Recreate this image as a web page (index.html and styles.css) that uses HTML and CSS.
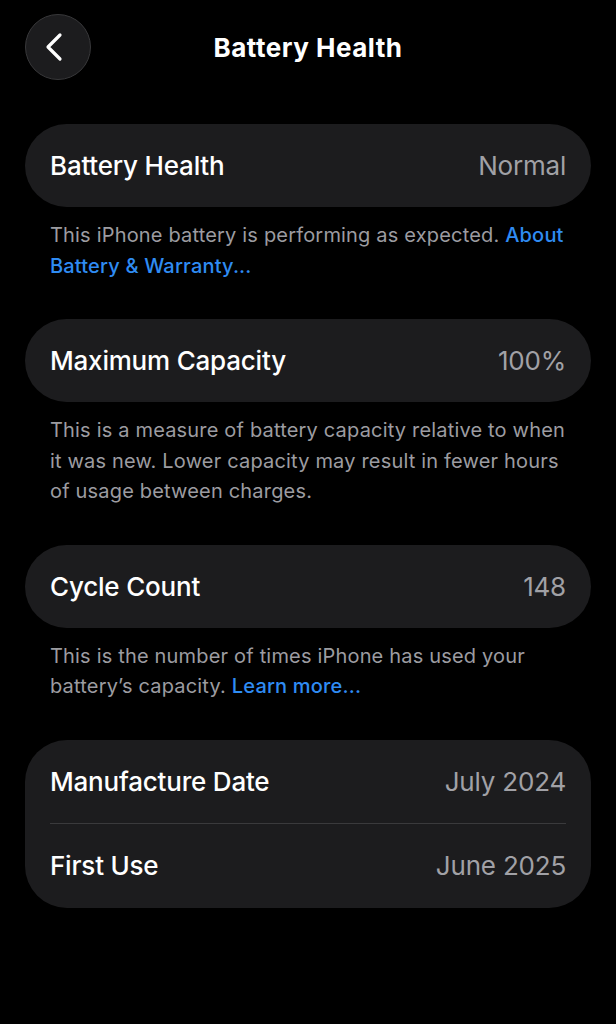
FILE: index.html
```html
<!DOCTYPE html>
<html lang="en">
<head>
<meta charset="UTF-8">
<meta name="viewport" content="width=device-width, initial-scale=1.0">
<title>Battery Health</title>
<link rel="stylesheet" href="styles.css">
</head>
<body>
<div id="screen">
    <div class="nav-bar">
        <button class="back-btn" type="button" aria-label="Back">
            <svg width="24" height="30" viewBox="0 0 24 30"><path d="M16 3 L4 15 L16 27" fill="none" stroke="#fff" stroke-width="3.2" stroke-linecap="round" stroke-linejoin="round"/></svg>
        </button>
        <h1 class="nav-title">Battery Health</h1>
    </div>

    <div class="section">
        <div class="card">
            <div class="row"><span class="label">Battery Health</span><span class="value">Normal</span></div>
        </div>
        <p class="footer">This iPhone battery is performing as expected. <a href="#">About Battery &amp; Warranty...</a></p>
    </div>

    <div class="section">
        <div class="card">
            <div class="row"><span class="label">Maximum Capacity</span><span class="value">100%</span></div>
        </div>
        <p class="footer">This is a measure of battery capacity relative to when it was new. Lower capacity may result in fewer hours of usage between charges.</p>
    </div>

    <div class="section">
        <div class="card">
            <div class="row"><span class="label">Cycle Count</span><span class="value">148</span></div>
        </div>
        <p class="footer">This is the number of times iPhone has used your battery’s capacity. <a href="#">Learn more...</a></p>
    </div>

    <div class="section">
        <div class="card">
            <div class="row"><span class="label">Manufacture Date</span><span class="value">July 2024</span></div>
            <div class="row"><span class="label">First Use</span><span class="value">June 2025</span></div>
        </div>
    </div>
</div>
</body>
</html>
```

FILE: styles.css
```css
/* iOS dark settings look */
body, html {
    margin: 0;
    padding: 0;
    background: #000;
    font-family: Inter, "Noto Sans", sans-serif;
    color: #fff;
}
#screen {
    width: 616px;
    height: 1024px;
    padding: 14px 25px 0;
    box-sizing: border-box;
}
.nav-bar {
    position: relative;
    height: 66px;
    display: flex;
    align-items: center;
    justify-content: center;
    margin-bottom: 44px;
}
.back-btn {
    position: absolute;
    left: 0;
    top: 0;
    width: 66px;
    height: 66px;
    border-radius: 50%;
    background: #1c1c1e;
    border: 1px solid #38383a;
    display: flex;
    align-items: center;
    justify-content: center;
    padding: 0 4px 0 0;
    cursor: pointer;
}
.nav-title {
    margin: 0;
    font-size: 26px;
    font-weight: 700;
    letter-spacing: 0.5px;
}
.section {
    margin-bottom: 38px;
}
.card {
    background: #1c1c1e;
    border-radius: 42px;
    padding: 0 25px;
}
.row {
    height: 83px;
    display: flex;
    align-items: center;
    justify-content: space-between;
    font-size: 26px;
    font-weight: 500;
    letter-spacing: -0.2px;
}
.row + .row {
    border-top: 1px solid #3a3a3c;
    height: 84px;
}
.label {
    color: #fff;
}
.value {
    color: #a1a1a6;
    font-weight: 400;
}
.footer {
    margin: 0;
    padding: 13px 25px 0;
    font-size: 20px;
    line-height: 30.5px;
    letter-spacing: 0.18px;
    color: #9c9ca1;
}
.footer a {
    color: #2f8cf3;
    text-decoration: none;
    font-weight: 500;
}
```
